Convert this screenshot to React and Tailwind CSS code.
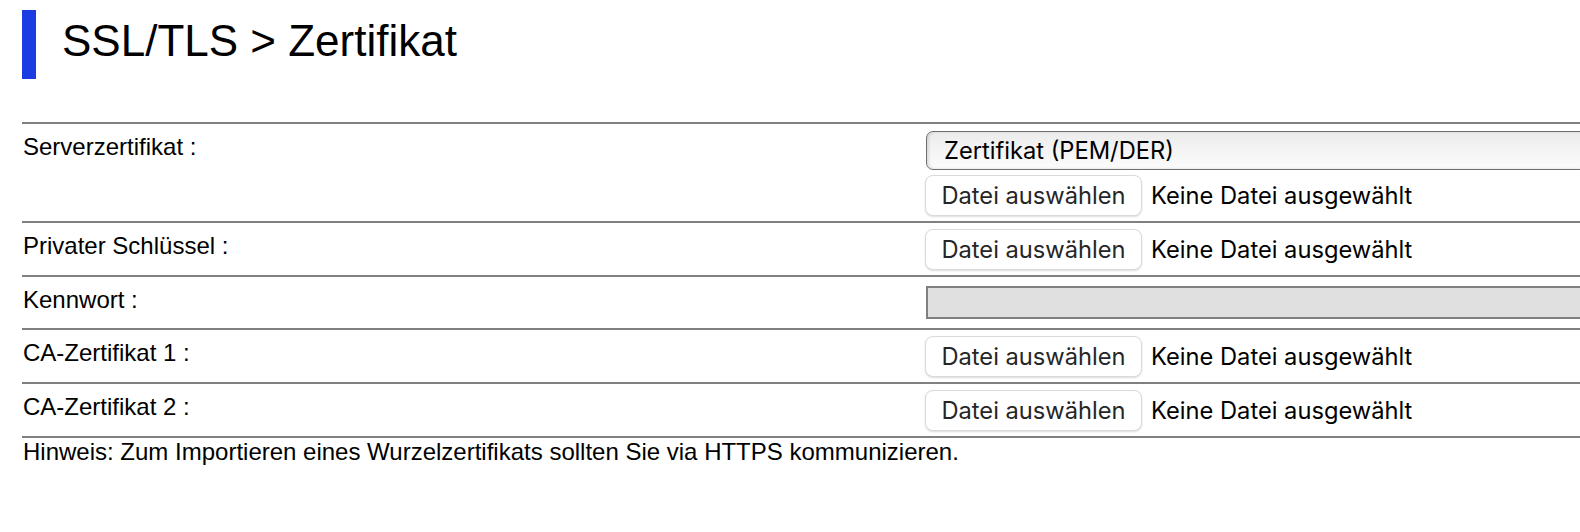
import React from "react";

const sans = { fontFamily: '"Liberation Sans", Arial, Helvetica, sans-serif' };

function FileInput() {
  return (
    <div className="flex items-center">
      <div className="h-[41px] w-[217px] flex items-center justify-center rounded-[8px] border border-[#dadada] bg-white text-[23.7px] text-[#262626] shadow-[0_1px_2px_rgba(0,0,0,0.14)] font-['Inter',sans-serif]">
        Datei auswählen
      </div>
      <span className="ml-[9px] text-[23.7px] text-black font-['Inter',sans-serif]">
        Keine Datei ausgewählt
      </span>
    </div>
  );
}

function Row({ label, children, pt = "pt-[7px]", pb = "pb-[5px]" }) {
  return (
    <div className="flex border-t-2 border-[#808080]">
      <div className="w-[903px] shrink-0 pl-[1px] pt-[5px] text-[24px] text-black" style={sans}>
        {label}
      </div>
      <div className={`flex-1 ${pt} ${pb}`}>{children}</div>
    </div>
  );
}

export default function App() {
  return (
    <div className="w-[1580px] h-[532px] overflow-hidden bg-white pt-[10px]">
      <div className="flex items-start pl-[22px]">
        <div className="h-[69px] w-[14px] bg-[#1a3ce0]" />
        <h1 className="ml-[26px] mt-[9px] text-[44px] leading-[44px] text-black" style={sans}>
          SSL/TLS &gt; Zertifikat
        </h1>
      </div>
      <div className="mt-[43px] ml-[22px] w-[1800px]">
        <Row label="Serverzertifikat :">
          <div className="ml-[1px] h-[39px] w-[800px] flex items-center rounded-l-[7px] border-[1.5px] border-[#6f6f6f] bg-gradient-to-b from-[#ececec] to-[#fcfcfc] shadow-[inset_2px_0_3px_rgba(0,0,0,0.12)] pl-[17px] text-[23.7px] text-black font-['Inter',sans-serif]">
            Zertifikat (PEM/DER)
          </div>
          <div className="mt-[5px]">
            <FileInput />
          </div>
        </Row>
        <Row label="Privater Schlüssel :" pt="pt-[6px]">
          <FileInput />
        </Row>
        <Row label="Kennwort :" pt="pt-[9px]" pb="pb-[9px]">
          <div className="ml-[1px] h-[33px] w-[800px] border-2 border-[#808080] bg-[#e0e0e0]" />
        </Row>
        <Row label="CA-Zertifikat 1 :" pt="pt-[6px]">
          <FileInput />
        </Row>
        <Row label="CA-Zertifikat 2 :" pt="pt-[6px]">
          <FileInput />
        </Row>
        <div className="border-t-2 border-[#808080] pl-[1px] text-[24px] leading-[22px] pt-[3px] text-black" style={sans}>
          Hinweis: Zum Importieren eines Wurzelzertifikats sollten Sie via HTTPS kommunizieren.
        </div>
      </div>
    </div>
  );
}
